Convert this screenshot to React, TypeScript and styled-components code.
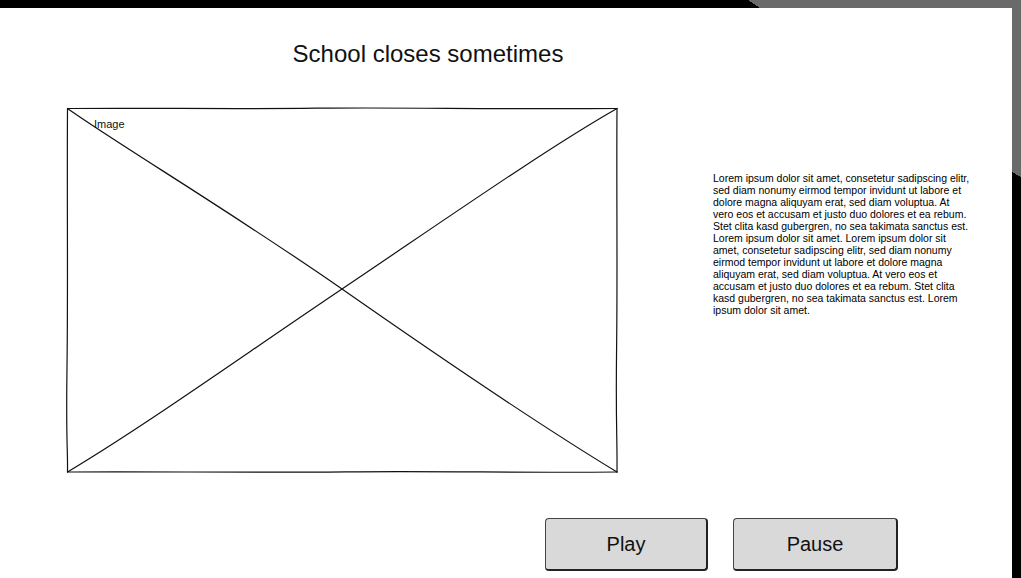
import React from "react";
import styled, { createGlobalStyle } from "styled-components";

const Global = createGlobalStyle`
  html, body { margin: 0; padding: 0; }
  body {
    width: 1021px;
    height: 578px;
    overflow: hidden;
    font-family: "Liberation Sans", Arial, sans-serif;
    background: linear-gradient(33deg, #000 892px, #6a6a6a 892px);
  }
`;

const Frame = styled.div`
  padding: 8px 9px 0 0;
  height: 578px;
  box-sizing: border-box;
`;

const Page = styled.main`
  background: #fff;
  height: 570px;
  display: flex;
  flex-direction: column;
`;

const Title = styled.h1`
  width: 856px;
  margin: 32px 0 0;
  text-align: center;
  font-size: 24px;
  line-height: 27px;
  font-weight: normal;
  color: #111;
`;

const ContentRow = styled.section`
  display: flex;
  align-items: flex-start;
  margin-top: 40px;
  padding-left: 66px;
`;

const Placeholder = styled.div`
  position: relative;
  width: 553px;
  height: 367px;
  flex-shrink: 0;
`;

const PlaceholderLabel = styled.span`
  position: absolute;
  left: 28px;
  top: 11px;
  font-size: 11px;
  color: #111;
`;

const Paragraph = styled.p`
  width: 258px;
  margin: 65px 0 0 94px;
  font-size: 10.5px;
  line-height: 12px;
  color: #000;
`;

const ButtonRow = styled.div`
  display: flex;
  gap: 25px;
  margin-top: 44px;
  padding-left: 545px;
`;

const SketchButton = styled.button<{ $w: number }>`
  width: ${(p) => p.$w}px;
  height: 53px;
  box-sizing: border-box;
  background: #d9d9d9;
  border: 1px solid #444;
  border-right: 2px solid #222;
  border-bottom: 2px solid #222;
  border-radius: 4px;
  font-family: "Liberation Sans", Arial, sans-serif;
  font-size: 20px;
  color: #111;
  padding: 0;
  cursor: pointer;
`;

const ImageSketch = () => (
  <svg width="553" height="367" viewBox="0 0 553 367" style={{ display: "block" }}>
    <g fill="none" stroke="#111" strokeWidth="1.2" strokeLinecap="round" strokeLinejoin="round">
      <path d="M1.5 1.5 C 80 0.8, 160 2.2, 250 1.2 S 420 2.4, 551 1.5" />
      <path d="M551 1.5 C 550.4 80, 551.6 160, 550.6 240 S 551.4 330, 551 365" />
      <path d="M1.5 365 C 90 364.4, 180 365.8, 280 364.8 S 450 366, 551 365" />
      <path d="M1.5 1.5 C 0.9 90, 2.1 180, 1 260 S 1.9 340, 1.5 365" />
      <path d="M1.5 1.5 C 50 36, 170 108, 276 182 S 480 322, 551 365" />
      <path d="M551 1.5 C 480 42, 380 112, 276 182 S 80 318, 1.5 365" />
    </g>
  </svg>
);

export default function App() {
  return (
    <>
      <Global />
      <Frame>
        <Page>
          <Title>School closes sometimes</Title>
          <ContentRow>
            <Placeholder>
              <ImageSketch />
              <PlaceholderLabel>Image</PlaceholderLabel>
            </Placeholder>
            <Paragraph>
              Lorem ipsum dolor sit amet, consetetur sadipscing elitr, sed diam nonumy eirmod tempor
              invidunt ut labore et dolore magna aliquyam erat, sed diam voluptua. At vero eos et
              accusam et justo duo dolores et ea rebum. Stet clita kasd gubergren, no sea takimata
              sanctus est. Lorem ipsum dolor sit amet. Lorem ipsum dolor sit amet, consetetur
              sadipscing elitr, sed diam nonumy eirmod tempor invidunt ut labore et dolore magna
              aliquyam erat, sed diam voluptua. At vero eos et accusam et justo duo dolores et ea
              rebum. Stet clita kasd gubergren, no sea takimata sanctus est. Lorem ipsum dolor sit
              amet.
            </Paragraph>
          </ContentRow>
          <ButtonRow>
            <SketchButton $w={163}>Play</SketchButton>
            <SketchButton $w={165}>Pause</SketchButton>
          </ButtonRow>
        </Page>
      </Frame>
    </>
  );
}
